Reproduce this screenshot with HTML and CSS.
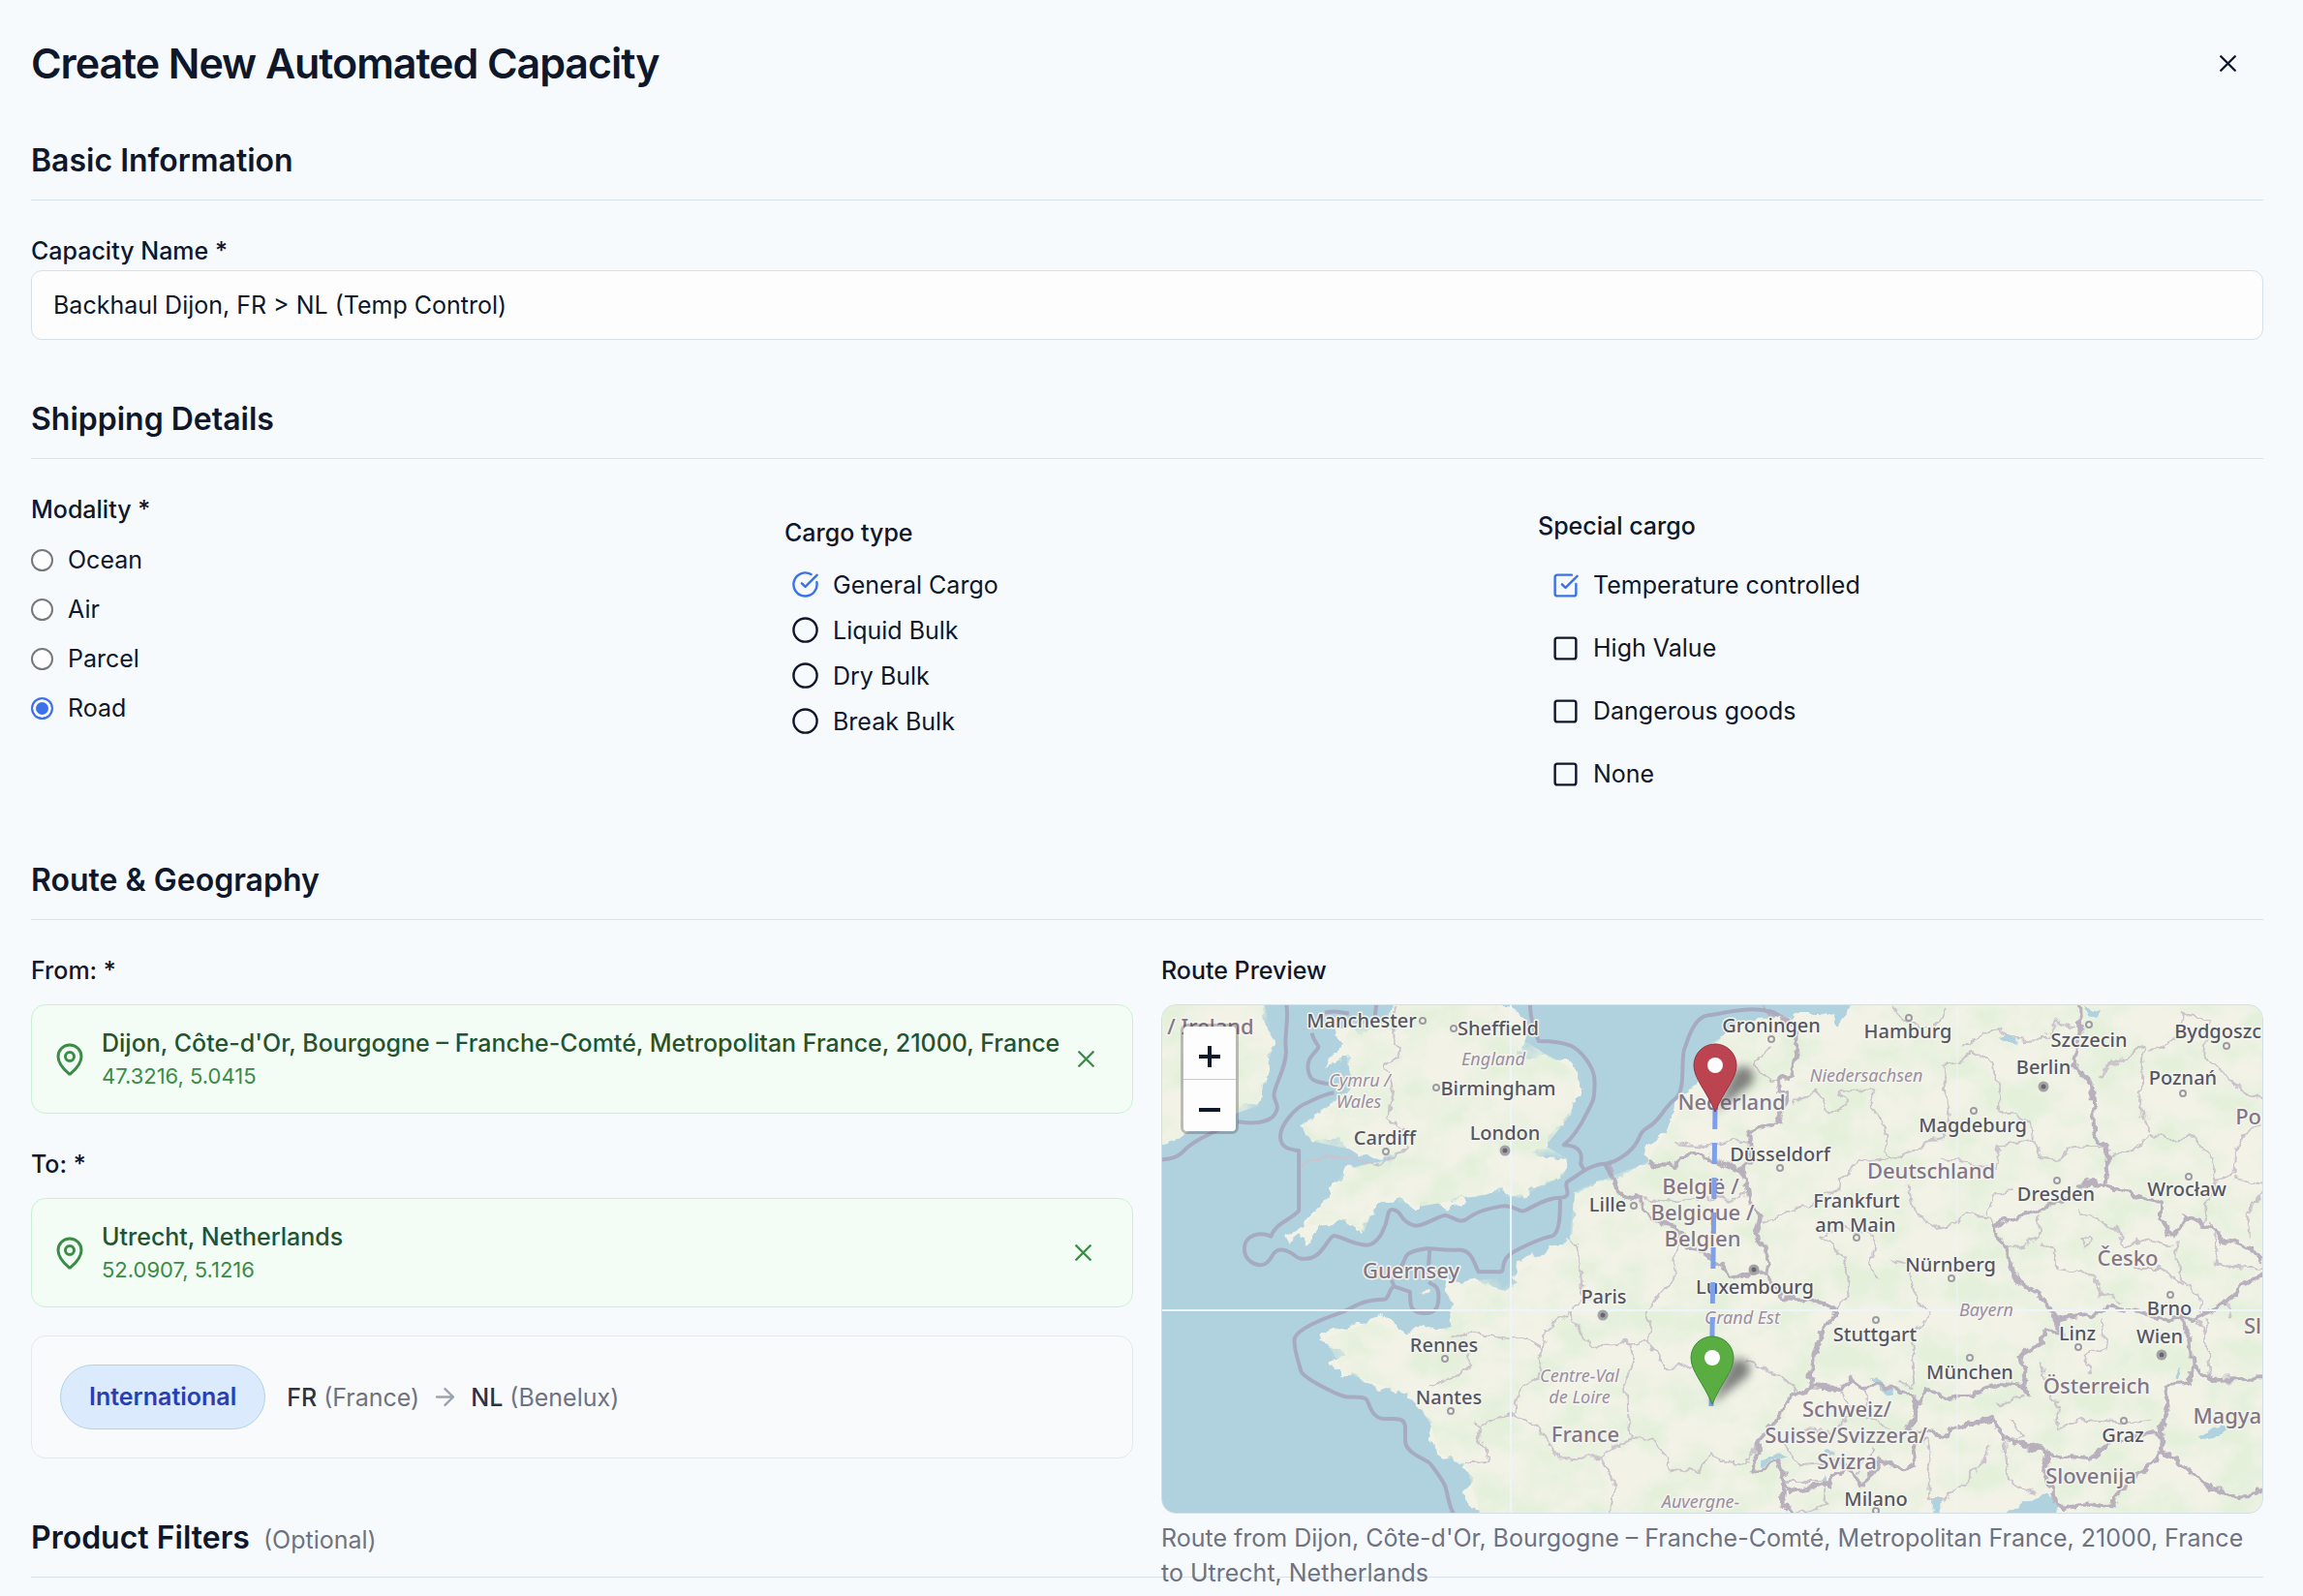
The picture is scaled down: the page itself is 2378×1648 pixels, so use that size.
FILE: index.html
```html
<!DOCTYPE html>
<html lang="en">
<head>
<meta charset="utf-8">
<meta name="viewport" content="width=device-width, initial-scale=1">
<title>Create New Automated Capacity</title>
<link rel="stylesheet" href="styles.css">
</head>
<body>
<svg width="0" height="0" class="sprite" aria-hidden="true">
  <symbol id="x" viewBox="0 0 24 24"><path d="M18 6 6 18M6 6l12 12"/></symbol>
  <symbol id="pin" viewBox="0 0 24 24"><path d="M20 10c0 4.993-5.539 10.193-7.399 11.799a1 1 0 0 1-1.202 0C9.539 20.193 4 14.993 4 10a8 8 0 0 1 16 0"/><circle cx="12" cy="10" r="3"/></symbol>
  <symbol id="circle" viewBox="0 0 24 24"><circle cx="12" cy="12" r="10"/></symbol>
  <symbol id="circle-check" viewBox="0 0 24 24"><path d="M21.801 10A10 10 0 1 1 17 3.335"/><path d="m9 11 3 3L22 4"/></symbol>
  <symbol id="square" viewBox="0 0 24 24"><rect x="3" y="3" width="18" height="18" rx="2"/></symbol>
  <symbol id="square-check" viewBox="0 0 24 24"><path d="M21 10.656V19a2 2 0 0 1-2 2H5a2 2 0 0 1-2-2V5a2 2 0 0 1 2-2h12.344"/><path d="m9 11 3 3L22 4"/></symbol>
  <symbol id="arrow" viewBox="0 0 24 24"><path d="M5 12h14M12 5l7 7-7 7"/></symbol>
</svg>
<form class="page">
  <header class="header">
    <h1>Create New Automated Capacity</h1>
    <button type="button" class="icon-button close" aria-label="Close"><svg class="icon"><use href="#x"/></svg></button>
  </header>

  <section class="section">
    <h2>Basic Information</h2>
    <div class="field">
      <label class="label" for="name">Capacity Name *</label>
      <input class="text-input" id="name" type="text" value="Backhaul Dijon, FR &gt; NL (Temp Control)">
    </div>
  </section>

  <section class="section">
    <h2>Shipping Details</h2>
    <div class="columns three">
      <fieldset class="group modality">
        <legend class="label">Modality *</legend>
        <label class="option"><input type="radio" name="modality">Ocean</label>
        <label class="option"><input type="radio" name="modality">Air</label>
        <label class="option"><input type="radio" name="modality">Parcel</label>
        <label class="option"><input type="radio" name="modality" checked>Road</label>
      </fieldset>
      <fieldset class="group cargo">
        <legend class="label">Cargo type</legend>
        <label class="option"><span class="mark"><input type="checkbox" checked><svg class="icon off"><use href="#circle"/></svg><svg class="icon on"><use href="#circle-check"/></svg></span>General Cargo</label>
        <label class="option"><span class="mark"><input type="checkbox"><svg class="icon off"><use href="#circle"/></svg><svg class="icon on"><use href="#circle-check"/></svg></span>Liquid Bulk</label>
        <label class="option"><span class="mark"><input type="checkbox"><svg class="icon off"><use href="#circle"/></svg><svg class="icon on"><use href="#circle-check"/></svg></span>Dry Bulk</label>
        <label class="option"><span class="mark"><input type="checkbox"><svg class="icon off"><use href="#circle"/></svg><svg class="icon on"><use href="#circle-check"/></svg></span>Break Bulk</label>
      </fieldset>
      <fieldset class="group special">
        <legend class="label">Special cargo</legend>
        <label class="option"><span class="mark"><input type="checkbox" checked><svg class="icon off"><use href="#square"/></svg><svg class="icon on"><use href="#square-check"/></svg></span>Temperature controlled</label>
        <label class="option"><span class="mark"><input type="checkbox"><svg class="icon off"><use href="#square"/></svg><svg class="icon on"><use href="#square-check"/></svg></span>High Value</label>
        <label class="option"><span class="mark"><input type="checkbox"><svg class="icon off"><use href="#square"/></svg><svg class="icon on"><use href="#square-check"/></svg></span>Dangerous goods</label>
        <label class="option"><span class="mark"><input type="checkbox"><svg class="icon off"><use href="#square"/></svg><svg class="icon on"><use href="#square-check"/></svg></span>None</label>
      </fieldset>
    </div>
  </section>

  <section class="section">
    <h2>Route &amp; Geography</h2>
    <div class="columns two">
      <div class="stops">
        <div class="stop">
          <div class="label">From: *</div>
          <div class="place">
            <svg class="icon pin"><use href="#pin"/></svg>
            <div class="place-text">
              <div class="place-name">Dijon, Côte-d'Or, Bourgogne – Franche-Comté, Metropolitan France, 21000, France</div>
              <div class="place-coords">47.3216, 5.0415</div>
            </div>
            <button type="button" class="icon-button clear" aria-label="Clear origin"><svg class="icon"><use href="#x"/></svg></button>
          </div>
        </div>
        <div class="stop">
          <div class="label">To: *</div>
          <div class="place">
            <svg class="icon pin"><use href="#pin"/></svg>
            <div class="place-text">
              <div class="place-name">Utrecht, Netherlands</div>
              <div class="place-coords">52.0907, 5.1216</div>
            </div>
            <button type="button" class="icon-button clear" aria-label="Clear destination"><svg class="icon"><use href="#x"/></svg></button>
          </div>
        </div>
        <div class="summary">
          <span class="badge">International</span>
          <div class="legs">
            <span><b>FR</b> (France)</span>
            <svg class="icon arrow"><use href="#arrow"/></svg>
            <span><b>NL</b> (Benelux)</span>
          </div>
        </div>
      </div>

      <div class="preview">
        <div class="label">Route Preview</div>
        <div class="map">
          <svg class="map-canvas" viewBox="0 0 1136 524" preserveAspectRatio="xMidYMid slice" role="img" aria-label="Map of the route">
            <defs>
              <filter id="rough" x="0" y="0" width="1" height="1"><feTurbulence type="fractalNoise" baseFrequency=".07" numOctaves="3" seed="4" result="n"/><feDisplacementMap in="SourceGraphic" in2="n" scale="13" xChannelSelector="R" yChannelSelector="G"/></filter>
              <filter id="woods" x="0" y="0" width="1" height="1"><feTurbulence type="fractalNoise" baseFrequency=".022 .026" numOctaves="5" seed="11"/><feColorMatrix values="0 0 0 0 .78  0 0 0 0 .87  0 0 0 0 .71  2.8 0 0 0 -1.02"/></filter>
              <filter id="soft" x="-1" y="-1" width="3" height="3"><feGaussianBlur stdDeviation="5"/></filter>
              <g id="land-shape" transform="translate(-10 -18) scale(.3827 .3333)">
                <path d="M655 40 640 85 628 110 560 140 540 110 480 120 515 175 460 240 530 215 537 280 530 325 470 370 400 425 430 475 500 470 560 515 620 528 682 500 650 530 645 560 520 560 508 592 480 610 475 650 430 700 408 742 360 770 368 785 398 765 410 800 428 772 460 740 510 718 570 755 600 680 660 650 705 680 745 665 785 685 812 650 910 640 930 625 945 640 990 650 1040 615 1110 580 1120 530 1060 525 1025 510 1060 490 1070 460 1100 430 1130 390 1150 310 1150 260 1120 225 1060 205 1010 225 985 205 1005 165 1005 100 975 70 920 40Z"/>
                <path d="M800 662 830 650 850 662 830 684Z"/>
                <path d="M0 40 300 40 305 100 325 180 310 260 285 365 260 360 225 375 200 400 100 440 60 470 0 500Z"/>
                <path d="M1881 40 1875 85 1855 115 1835 90 1800 78 1740 78 1720 95 1640 95 1560 110 1550 140 1490 180 1475 250 1470 300 1412 340 1400 400 1380 450 1330 490 1335 540 1270 580 1210 600 1140 630 1135 740 1125 780 1040 825 980 860 975 890 985 915 950 930 870 905 830 912 780 895 800 950 805 1050 760 1050 720 1040 680 1078 650 1040 620 1015 590 1030 520 1045 460 1075 455 1100 510 1120 515 1145 470 1160 510 1180 510 1205 550 1195 600 1235 700 1265 710 1300 735 1310 750 1350 740 1385 775 1445 845 1480 860 1530 835 1570 890 1650 3100 1650 3100 40Z"/>
                <path d="M725 938 745 932 748 946 730 950Z"/>
              </g>
              <clipPath id="land-clip"><path transform="translate(-10 -18) scale(.3827 .3333)" d="M655 40 628 110 540 110 515 175 537 280 470 370 400 425 430 475 650 530 520 560 475 650 410 740 510 718 570 755 600 680 705 680 910 640 990 650 1110 580 1120 530 1060 490 1130 390 1150 260 1060 205 1005 165 920 40ZM0 40 300 40 325 180 285 365 200 400 0 500ZM1881 40 1875 115 1640 95 1490 180 1470 300 1335 540 1140 630 1125 780 975 890 805 920 805 1050 680 1078 600 1030 465 1085 515 1190 700 1265 750 1350 775 1445 845 1480 890 1650 3100 1650 3100 40Z"/></clipPath>
            </defs>
            <rect class="sea" width="1136" height="524"/>
            <g filter="url(#rough)"><rect width="1136" height="524" fill="none"/><use href="#land-shape" class="land"/></g>
            <g clip-path="url(#land-clip)"><rect width="1136" height="524" filter="url(#woods)"/></g>
            <g filter="url(#rough)">
              <rect width="1136" height="524" fill="none"/>
              <g transform="translate(-10 -18) scale(.3827 .3333)">
                <g class="water">
                  <path d="M2275 1650 2340 1600 2400 1572 2440 1580 2440 1612 2415 1650ZM1640 1460 1680 1440 1708 1448 1680 1456 1650 1475ZM1935 1210 1970 1225 2000 1255 1980 1258 1950 1235ZM1815 1430 1840 1425 1845 1450 1825 1450ZM2105 1629 2110 1580 2125 1585 2120 1629ZM2815 1395 2900 1355 2910 1362 2880 1385 2830 1405ZM2280 150 2315 140 2335 180 2310 170ZM2515 60 2550 70 2545 90 2525 85ZM1800 1530 1815 1510 1820 1535 1800 1545ZM2768 1190 2778 1185 2770 1215 2760 1210Z"/>
                </g>
                <g class="regions">
                  <path d="M805 1080 900 1070 970 1090 1010 1088 1055 1130 1060 1060 1130 1000 1160 950 1155 870 1150 800 1125 780M1055 1130 1050 1200 985 1250 975 1320 1040 1360 1100 1460 1210 1455 1290 1395 1275 1230 1300 1150 1285 1100 1180 1110 1135 1030 1130 1000M855 1130 860 1160 830 1200 745 1235M975 1320 875 1355 905 1470 845 1475M1210 1455 1245 1540 1235 1640M1290 1400 1350 1400 1400 1490 1475 1500 1500 1440 1568 1475 1600 1480 1640 1400M1285 1100 1340 1100 1390 1180 1460 1170M1340 1100 1340 970 1400 920 1410 860 1420 760M1600 1160 1640 1175 1720 1220 1740 1260M655 60 640 110 670 210 630 240 650 330 635 400 680 440"/>
                  <path d="M1665 180 1625 230 1660 290 1725 270M1725 360 1790 320 1830 390 1870 360 1850 320 1940 320 1945 380 1980 450 1975 500 2000 530M1605 480 1560 470 1500 490 1410 480M1645 720 1760 680 1850 620 1900 540 2000 530 2090 480 2140 470 2150 390 2130 240 2180 230 2210 190 2270 240 2290 380 2370 420 2375 470 2285 490 2275 560 2130 530M2040 610 2050 680 2110 740 2170 730 2200 700 2260 710 2270 740M2320 620 2270 650 2250 700M2375 470 2400 525 2450 530 2480 500 2570 490M1950 770 1860 740 1800 770 1840 800 1870 860 1875 960 1845 995M2050 680 2040 610M1950 770 1940 870 1960 900M1990 840 2040 850 2060 960 2090 1000 2080 1045 2045 1070 2055 1240 2010 1220M2180 180 2270 130 2350 160 2410 155 2440 100 2490 130M2000 60 2040 110 2110 130 2140 70"/>
                  <path d="M2580 520 2650 510 2690 450 2740 470 2800 460 2860 530 2870 590 2920 580 2925 500 2960 430 2998 430M2690 440 2665 370 2670 230 2680 180 2580 240 2560 280M2870 590 2850 660 2830 740M2690 200 2770 150 2780 80 2850 100 2840 220 2920 300 2998 350M2920 590 2998 610 2960 700 2960 770M2500 690 2540 720 2600 740 2620 800 2680 780 2750 800M2390 790 2440 810 2440 880 2540 890 2560 950 2620 970M2395 700 2390 770 2310 810M2500 780 2530 765 2540 790 2515 810 2500 780M2760 790 2770 900 2820 950 2830 1010M2650 870 2720 870 2780 920M2850 720 2880 800 2870 860 2998 870M2560 1030 2570 1120 2520 1130 2530 1200M2400 1160 2420 1260 2450 1300 2440 1360 2500 1340 2640 1350 2690 1340M2280 1300 2350 1260M2310 1330 2350 1390 2320 1400M2260 1420 2240 1480 2180 1540 2130 1590 2090 1570 2100 1430 2080 1400M2300 1410 2310 1540 2390 1560M2840 1030 2850 1200M2900 1030 2910 960M2820 1030 2850 1100"/>
                  <path d="M1860 1250 1880 1300 1840 1380 1760 1370M1920 1240 1930 1330 1990 1370M1700 1400 1740 1480 1860 1470M1940 1430 1900 1500M395 555 455 520 530 530 620 545 655 520 690 490M1310 650 1400 665 1480 650 1560 660 1600 640M1700 1530 1810 1530 1820 1600 1730 1629"/>
                </g>
                <g class="borders">
                  <path d="M1220 545 1245 590 1255 640 1310 655 1330 690 1370 730 1410 740 1450 800 1490 820 1530 855 1560 890 1655 890M1335 540 1370 548 1410 555 1430 520 1480 515 1540 545 1590 570M1640 55 1680 90 1740 110 1738 190 1725 270 1688 280 1690 320 1720 330 1690 390 1700 415 1610 440 1605 470 1620 530 1590 560 1605 640 1640 710 1625 770 1645 800 1660 850 1655 890 1700 960 1780 968 1845 995 1810 1060 1785 1130 1775 1240 1860 1245 1880 1210 1910 1235 1990 1235 2050 1270 2065 1300 2090 1245 2150 1275 2200 1265 2280 1230 2350 1235 2365 1265 2350 1190 2340 1140 2400 1100 2410 1065 2450 1070 2440 1030 2400 960 2340 910 2320 870 2305 810 2270 735 2340 710 2410 680 2450 650 2510 650M2500 610 2569 615 2579 520 2540 440 2535 300 2485 240 2505 150 2500 40M2510 600 2569 615 2640 640 2720 670 2720 710 2755 770 2785 710 2860 745 2895 785 2960 800 2998 850M2444 1030 2559 1010 2579 985 2648 1000 2738 1030 2818 1020 2897 980 2937 920 2998 890M2780 1030 2800 1100 2805 1165 2795 1225 2730 1235 2740 1300 2720 1370 2725 1430 2780 1480 2850 1550 2900 1570 2960 1570 2998 1550M2805 1165 2860 1215 2998 1210M2065 1300 2040 1360 2070 1370 2140 1390 2160 1360 2269 1335 2299 1400 2419 1440 2528 1460 2598 1400 2708 1380 2725 1430 2708 1470 2640 1520 2600 1580 2590 1610 2530 1600 2450 1620 2405 1500 2419 1440M1775 1240 1715 1270 1700 1320 1640 1400 1615 1500 1640 1490 1690 1460 1705 1530 1720 1560 1830 1535 1870 1480 1920 1540 1960 1460 2020 1490 2060 1480 2055 1430 2080 1400M1705 1530 1700 1600 1730 1640"/>
                </g>
              </g>
            </g>
            <g class="maritime" transform="translate(-10 -18) scale(.3827 .3333)">
              <path d="M360 40C370 100 355 140 360 190S325 310 328 335 345 365 330 392 270 422 230 415M210 425C150 450 100 485 85 505S50 530 20 533M430 140C435 175 455 175 445 190S415 220 420 255 440 290 475 298M465 77C490 70 505 75 530 80M605 45 600 90"/>
              <path d="M490 325C460 330 430 350 410 360S345 420 345 460 375 500 395 505L395 690C380 715 330 730 320 770 290 755 250 765 248 805S280 865 300 857 320 825 335 815 375 820 385 830 430 850 455 815 480 770 490 768 540 795 575 797 630 740 635 705 665 695 670 705 690 735 710 737 775 705 790 705 830 735 850 715 900 685 940 677 985 700 1005 690 1060 650 1100 650 1105 610 1120 600 1165 565 1175 560 1200 545 1220 545 1280 520 1300 490 1310 450 1340 430 1380 370 1410 345 1425 220 1435 190 1460 90 1500 85 1590 60 1640 68 1670 75 1690 85"/>
              <path d="M1018 40C1020 80 1020 100 1042 165 1080 165 1110 170 1130 180S1193 240 1193 290 1190 350 1180 370 1150 450 1110 487C1160 490 1160 520 1155 545L1165 565M1220 545 1240 585M1100 650C1100 700 1100 765 1075 770S980 810 960 830 950 880 940 880L880 880C865 850 865 810 820 812S760 805 740 808 695 815 685 830L665 880M748 812 745 860"/>
              <path d="M645 905 652 925C635 935 640 965 625 965 560 965 540 995 500 1010S385 1060 383 1090 395 1160 400 1185 510 1268 530 1268 575 1265 580 1280 595 1335 625 1335 680 1330 682 1360L682 1405C685 1445 740 1460 750 1475S785 1530 790 1545 800 1610 815 1635M652 925 695 942C695 985 695 1005 730 1008S772 990 772 955 755 920 745 912"/>
            </g>
            <path class="tiles" d="M360 0V524M0 315H1136"/><path class="tiles thin" d="M821 0V524"/>
            <g class="dots">
              <circle cx="269" cy="16" r="3"/><circle cx="301" cy="24" r="3"/><circle cx="283" cy="85" r="3"/><circle cx="231" cy="151" r="3"/><circle cx="487" cy="207" r="3"/><circle cx="292" cy="365" r="3"/><circle cx="298" cy="419" r="3"/><circle cx="629" cy="35" r="3"/><circle cx="771" cy="13" r="3"/><circle cx="957" cy="20" r="3"/><circle cx="1099" cy="42" r="3"/><circle cx="1054" cy="91" r="3"/><circle cx="838" cy="109" r="3"/><circle cx="638" cy="168" r="3"/><circle cx="717" cy="240" r="3"/><circle cx="924" cy="181" r="3"/><circle cx="1060" cy="177" r="3"/><circle cx="815" cy="282" r="3"/><circle cx="737" cy="325" r="3"/><circle cx="834" cy="364" r="3"/><circle cx="946" cy="353" r="3"/><circle cx="1041" cy="299" r="3"/><circle cx="993" cy="429" r="3"/><circle cx="737" cy="522" r="3"/>
            </g>
            <g class="capitals">
              <circle cx="354" cy="150" r="4"/><circle cx="455" cy="320" r="4"/><circle cx="611" cy="273" r="4"/><circle cx="910" cy="84" r="4"/><circle cx="1032" cy="361" r="4"/>
            </g>
            <g class="names countries">
              <text x="50" y="30">/ Ireland</text><text x="588" y="108">Nederland</text><text x="794" y="179">Deutschland</text>
              <text x="556" y="195">België /</text><text x="558" y="222">Belgique /</text><text x="558" y="249">Belgien</text>
              <text x="257" y="282">Guernsey</text><text x="437" y="451">France</text><text x="997" y="269">Česko</text>
              <text x="965" y="401">Österreich</text><text x="707" y="425">Schweiz/</text><text x="706" y="452">Suisse/Svizzera/</text><text x="707" y="479">Svizra</text><text x="959" y="494">Slovenija</text>
              <text class="at-edge" x="1135" y="432">Magya</text><text class="at-edge" x="1135" y="123">Po</text><text class="at-edge" x="1135" y="339">Sl</text>
            </g>
            <g class="names cities">
              <text x="206" y="23">Manchester</text><text x="347" y="31">Sheffield</text><text x="347" y="93">Birmingham</text><text x="230" y="144">Cardiff</text><text x="354" y="139">London</text><text x="460" y="213">Lille</text><text x="456" y="308">Paris</text><text x="291" y="358">Rennes</text><text x="296" y="412">Nantes</text>
              <text x="629" y="28">Groningen</text><text x="770" y="34">Hamburg</text><text x="957" y="43">Szczecin</text><text class="at-edge" x="1135" y="34">Bydgoszc</text><text x="910" y="71">Berlin</text><text x="1054" y="82">Poznań</text><text x="837" y="131">Magdeburg</text><text x="638" y="161">Düsseldorf</text><text x="717" y="209">Frankfurt</text><text x="716" y="234">am Main</text><text x="923" y="202">Dresden</text><text x="1058" y="197">Wrocław</text><text x="814" y="275">Nürnberg</text>
              <text x="612" y="298">Luxembourg</text><text x="736" y="347">Stuttgart</text><text x="834" y="386">München</text><text x="945" y="346">Linz</text><text x="1030" y="349">Wien</text><text x="1040" y="320">Brno</text><text x="992" y="451">Graz</text><text x="737" y="517">Milano</text>
            </g>
            <g class="names states">
              <text x="342" y="62">England</text><text x="204" y="84">Cymru /</text><text x="203" y="106">Wales</text><text x="727" y="79">Niedersachsen</text><text x="851" y="321">Bayern</text><text x="599" y="329">Grand Est</text><text x="431" y="389">Centre-Val</text><text x="431" y="411">de Loire</text><text x="556" y="519">Auvergne-</text>
            </g>
            <path class="route" d="M571 106 567 414"/>
            <g class="shadows" filter="url(#soft)"><path d="M571 110 592 65Q614 58 610 80ZM567 412 588 367Q610 360 606 382Z"/></g>
            <path class="marker destination" d="M571 110C562 88 549 76 549 62A22 22 0 0 1 593 62C593 76 580 88 571 110Z"/><circle cx="571" cy="62" r="8" class="eye"/>
            <path class="marker origin" d="M568 412C559 390 546 378 546 364A22 22 0 0 1 590 364C590 378 577 390 568 412Z"/><circle cx="568" cy="364" r="8" class="eye"/>
          </svg>
          <div class="zoom">
            <button type="button" aria-label="Zoom in"><svg viewBox="0 0 22 22"><path d="M0 11h22M11 0v22"/></svg></button>
            <button type="button" aria-label="Zoom out"><svg viewBox="0 0 22 22"><path d="M0 11h22"/></svg></button>
          </div>
        </div>
        <p class="caption">Route from Dijon, Côte-d'Or, Bourgogne – Franche-Comté, Metropolitan France, 21000, France to Utrecht, Netherlands</p>
      </div>
    </div>
  </section>

  <section class="section">
    <h2>Product Filters <span class="optional">(Optional)</span></h2>
  </section>
</form>
</body>
</html>
```
FILE: styles.css
```css
* { box-sizing: border-box; }

body {
  margin: 0;
  background: #f7fafd;
  color: #0f172a;
  font: 400 25px/36px Inter, "Liberation Sans", sans-serif;
}

button, input { font: inherit; color: inherit; }
h1, h2, p, fieldset { margin: 0; padding: 0; border: 0; }
.sprite { position: absolute; }

.page {
  display: flex;
  flex-direction: column;
  gap: 60px;
  padding: 32px 41px 18px 32px;
}

.header {
  display: flex;
  align-items: center;
  justify-content: space-between;
  margin-bottom: -14px;
}
h1 {
  font-size: 43px;
  line-height: 66px;
  font-weight: 600;
  letter-spacing: -0.025em;
}
h2 {
  padding-bottom: 18px;
  border-bottom: 1px solid #d8e2ea;
  font-size: 32px;
  line-height: 44px;
  font-weight: 600;
}
.optional {
  margin-left: 6px;
  color: #6f7280;
  font-size: 25px;
  font-weight: 400;
  line-height: 25px;
}

.icon {
  display: block;
  flex: none;
  width: 29px;
  height: 29px;
  fill: none;
  stroke: currentColor;
  stroke-width: 2;
  stroke-linecap: round;
  stroke-linejoin: round;
}
.icon-button {
  display: flex;
  align-items: center;
  justify-content: center;
  padding: 0;
  border: 0;
  background: none;
}
.close { width: 73px; height: 66px; }

.label { display: block; padding: 0; font-weight: 500; line-height: 36px; }
.field { display: flex; flex-direction: column; gap: 2px; padding-top: 34px; }
.text-input {
  width: 100%;
  height: 72px;
  padding: 0 22px;
  border: 1px solid #d5e0e8;
  border-radius: 11px;
  background: #fdfdfe;
}

.columns { display: grid; gap: 29px; padding-top: 34px; }
.three { grid-template-columns: repeat(3, 1fr); align-items: start; }
.two { grid-template-columns: repeat(2, minmax(0, 1fr)); }

.group { display: flex; flex-direction: column; min-width: 0; }
.option { display: flex; align-items: center; gap: 14px; }
.modality .label { margin-bottom: 16px; }
.modality .option { gap: 15px; }
.modality .option + .option { margin-top: 15px; }
.modality input {
  appearance: none;
  width: 23px;
  height: 23px;
  margin: 0;
  border: 2px solid #77787e;
  border-radius: 50%;
  background: #fdfdfe;
}
.modality input:checked {
  border-color: #3b71ea;
  background: #3b71ea;
  box-shadow: inset 0 0 0 3px #fdfdfe;
}
.cargo { margin-top: 24px; }
.cargo .label { margin-bottom: 12px; }
.cargo .option { height: 47px; padding-left: 7px; }
.special { margin-top: 17px; }
.special .label { margin-bottom: 15px; }
.special .option { height: 56px; padding-left: 14px; }
.special .option + .option { margin-top: 9px; }

.mark { position: relative; }
.mark input { position: absolute; inset: 0; width: 100%; height: 100%; margin: 0; opacity: 0; }
.mark .on { display: none; color: #3b71ea; }
.mark input:checked ~ .on { display: block; }
.mark input:checked ~ .off { display: none; }

.stops { display: flex; flex-direction: column; }
.stop { display: flex; flex-direction: column; gap: 17px; }
.stop + .stop { margin-top: 34px; }
.place {
  display: flex;
  align-items: center;
  padding: 21px;
  border: 1px solid #c9f0d3;
  border-radius: 15px;
  background: #f3fdf6;
  color: #3a8c46;
}
.pin { width: 36px; height: 36px; margin-right: 15px; }
.place-text { flex: 1 0 auto; }
.place-name { color: #24542f; font-weight: 500; }
.place-coords { font-size: 22px; line-height: 33px; }
.clear { flex: 0 1 60px; height: 60px; }

.summary {
  display: flex;
  align-items: center;
  gap: 22px;
  margin-top: 29px;
  padding: 29px;
  border: 1px solid #e5e8ec;
  border-radius: 15px;
  background: #f9fafc;
}
.badge {
  padding: 15px 29px;
  border: 1px solid #b0d3e4;
  border-radius: 34px;
  background: #dceafd;
  color: #2640b4;
  font-weight: 600;
  line-height: 35px;
}
.legs { display: flex; align-items: center; gap: 12px; color: #6f7280; }
.legs b { color: #2b3443; font-weight: 500; }
.arrow { color: #9ca3af; }

/* The preview may run past the stops without pushing the next section down. */
.preview { position: relative; contain: size; }
.map {
  position: relative;
  overflow: hidden;
  margin-top: 17px;
  border: 1px solid #d3dee6;
  border-radius: 15px;
}
.map-canvas { display: block; width: 100%; aspect-ratio: 1136 / 524; }
.caption { margin-top: 7px; color: #6f7280; }

.sea, .water { fill: #b0d2de; }
.land { fill: #f2f2e7; }
.regions, .borders, .maritime, .tiles { fill: none; stroke-linejoin: round; }
.regions path, .borders path, .maritime path { vector-effect: non-scaling-stroke; }
.regions { stroke: #cbc3cb; stroke-width: 2; }
.borders { stroke: #b9b0bd; stroke-width: 4; }
.maritime { stroke: #a6abc2; stroke-width: 4; }
.tiles { stroke: #eef4fb; stroke-width: 2; }
.thin { stroke-width: 1; }
.dots { fill: #f4f4ec; stroke: #9c9ba0; stroke-width: 2; }
.capitals { fill: #66666c; stroke: #a3a2a7; stroke-width: 3; }
.names {
  font-family: "Noto Sans", "Open Sans", sans-serif;
  font-size: 20px;
  text-anchor: middle;
  paint-order: stroke;
  stroke: #f5f5ee;
  stroke-width: 3;
  stroke-linejoin: round;
}
.names .at-edge { text-anchor: end; }
.cities { fill: #555762; font-weight: 500; }
.countries { fill: #827787; font-size: 22px; font-weight: 500; }
.states { fill: #9a8f9f; font-size: 18px; font-style: italic; }
.route { fill: none; stroke: #7f9fe8; stroke-width: 5; stroke-dasharray: 22 14; }
.shadows { fill: #44444a; opacity: .65; }
.marker { stroke-width: 1; }
.destination { fill: #bb4450; stroke: #8f3340; }
.origin { fill: #5aae41; stroke: #3e8a3a; }
.eye { fill: #fdfdfe; }

.zoom {
  position: absolute;
  top: 19px;
  left: 19px;
  overflow: hidden;
  border: 3px solid rgba(70, 55, 70, .3);
  border-radius: 7px;
  background-clip: padding-box;
}
.zoom button {
  display: flex;
  align-items: center;
  justify-content: center;
  width: 54px;
  height: 54px;
  padding: 8px 0 0;
  border: 0;
  background: #fdfdfe;
}
.zoom button + button { border-top: 1px solid #ccc; }
.zoom svg { width: 22px; height: 22px; stroke: #0f172a; stroke-width: 4; }
```
